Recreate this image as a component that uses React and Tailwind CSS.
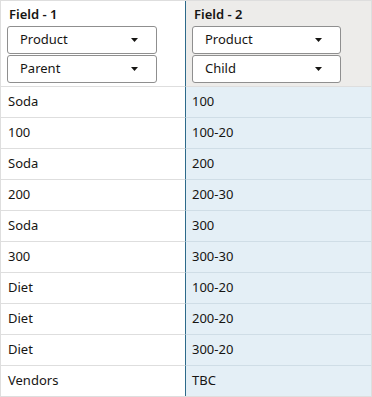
import React from "react";

const rows = [
  ["Soda", "100"],
  ["100", "100-20"],
  ["Soda", "200"],
  ["200", "200-30"],
  ["Soda", "300"],
  ["300", "300-30"],
  ["Diet", "100-20"],
  ["Diet", "200-20"],
  ["Diet", "300-20"],
  ["Vendors", "TBC"],
];

function Caret() {
  return (
    <svg width="7" height="4" viewBox="0 0 7 4" className="shrink-0">
      <path d="M0 0 H7 L3.5 4 Z" fill="#161513" />
    </svg>
  );
}

function Select({ label }) {
  return (
    <div className="flex h-[28px] items-center justify-between rounded-[3px] border border-[#8f8f8f] bg-white pl-[12px] pr-[18px] text-[13px] text-[#161513]">
      <span>{label}</span>
      <Caret />
    </div>
  );
}

export default function App() {
  return (
    <div
      className="w-[372px] h-[397px] overflow-hidden border border-[#dedede] bg-white text-[#161513]"
      style={{ fontFamily: '"Noto Sans", "Open Sans", sans-serif' }}
    >
      <div className="grid grid-cols-[184px_1fr]">
        <div className="flex h-[86px] flex-col border-b border-[#dedede] pl-[6px] pr-[28px]">
          <div className="h-[25px] pl-[2px] pt-[5px] text-[13px] font-semibold leading-[16px]">Field - 1</div>
          <div className="flex flex-col gap-[1px]">
            <Select label="Product" />
            <Select label="Parent" />
          </div>
        </div>
        <div className="flex h-[86px] flex-col border-b border-l border-[#dedede] border-l-[#2d6a8a] bg-[#edecea] pl-[6px] pr-[30px]">
          <div className="h-[25px] pl-[2px] pt-[5px] text-[13px] font-semibold leading-[16px]">Field - 2</div>
          <div className="flex flex-col gap-[1px]">
            <Select label="Product" />
            <Select label="Child" />
          </div>
        </div>
        {rows.map(([a, b], i) => (
          <React.Fragment key={i}>
            <div className="flex h-[31px] items-center border-b border-[#dedede] pl-[7px] text-[13px]">{a}</div>
            <div className="flex h-[31px] items-center border-b border-l border-[#cfdde6] border-l-[#2d6a8a] bg-[#e4eff6] pl-[6px] text-[13px]">{b}</div>
          </React.Fragment>
        ))}
      </div>
    </div>
  );
}
